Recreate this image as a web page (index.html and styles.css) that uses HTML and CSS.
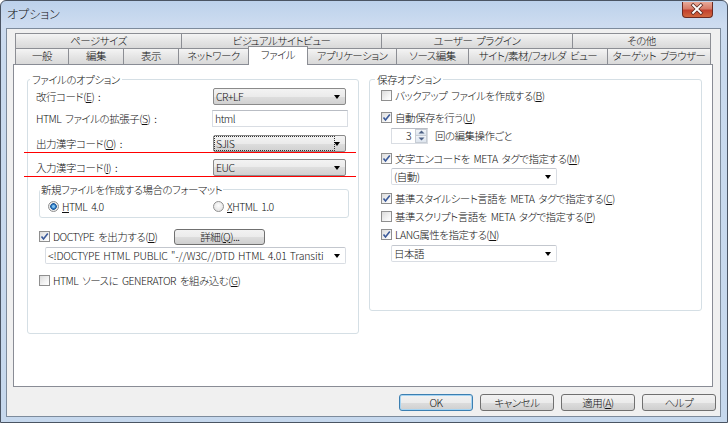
FILE: index.html
```html
<!DOCTYPE html>
<html lang="ja">
<head>
<meta charset="utf-8">
<title>オプション</title>
<link rel="stylesheet" href="styles.css">
</head>
<body>
<div class="window">
  <div class="titlebar">
    <span class="title">オプション</span>
    <div class="close">
      <svg width="31" height="16" viewBox="0 0 31 16"><path d="M11.5 4 L19.5 12 M19.5 4 L11.5 12" stroke="#5a2a22" stroke-width="3.6" stroke-linecap="square"/><path d="M11.5 4 L19.5 12 M19.5 4 L11.5 12" stroke="#fff" stroke-width="2" stroke-linecap="square"/></svg>
    </div>
  </div>
  <div class="client">
    <div class="tabs">
      <div class="tabrow row1">
        <div class="tab">ページサイズ</div>
        <div class="tab">ビジュアルサイトビュー</div>
        <div class="tab">ユーザー プラグイン</div>
        <div class="tab">その他</div>
      </div>
      <div class="tabrow row2">
        <div class="tab">一般</div>
        <div class="tab">編集</div>
        <div class="tab">表示</div>
        <div class="tab">ネットワーク</div>
        <div class="tab active">ファイル</div>
        <div class="tab">アプリケーション</div>
        <div class="tab">ソース編集</div>
        <div class="tab">サイト/素材/フォルダ ビュー</div>
        <div class="tab">ターゲット ブラウザー</div>
      </div>
    </div>
    <div class="panel">
      <div class="gbox gleft">
        <div class="gtitle">ファイルのオプション</div>
        <div class="gbody">
          <div class="frow r1"><span>改行コード(<u>E</u>) :</span><div class="combo ro"><span class="cval">CR+LF</span><i class="arrow"></i></div></div>
          <div class="frow r2"><span>HTML ファイルの拡張子(<u>S</u>) :</span><div class="tbox">html</div></div>
          <div class="frow mark r3"><span>出力漢字コード(<u>O</u>) :</span><div class="combo ro"><span class="cval focus">SJIS</span><i class="arrow"></i></div></div>
          <div class="frow mark r4"><span>入力漢字コード(<u>I</u>) :</span><div class="combo ro"><span class="cval">EUC</span><i class="arrow"></i></div></div>
          <div class="gbox sub">
            <div class="gtitle">新規ファイルを作成する場合のフォーマット</div>
            <div class="radios">
              <div class="opt"><i class="radio on"></i><span><u>H</u>TML 4.0</span></div>
              <div class="opt"><i class="radio"></i><span><u>X</u>HTML 1.0</span></div>
            </div>
          </div>
          <div class="crow doctype">
            <i class="cb on"><svg width="9" height="9" viewBox="0 0 9 9"><path d="M1.5 4.5 L3.5 7 L7.8 1.5" fill="none" stroke="#3b5a9a" stroke-width="1.6"/></svg></i>
            <span>DOCTYPE を出力する(<u>D</u>)</span>
            <div class="btn detail">詳細(<u>Q</u>)...</div>
          </div>
          <div class="combo ed dtcombo"><span class="cval clip">&lt;!DOCTYPE HTML PUBLIC "-//W3C//DTD HTML 4.01 Transiti</span><i class="arrow"></i></div>
          <div class="crow gen">
            <i class="cb"></i>
            <span>HTML ソースに GENERATOR を組み込む(<u>G</u>)</span>
          </div>
        </div>
      </div>
      <div class="gbox gright">
        <div class="gtitle">保存オプション</div>
        <div class="gbody">
          <div class="crow k1"><i class="cb"></i><span>バックアップ ファイルを作成する(<u>B</u>)</span></div>
          <div class="crow k2"><i class="cb on"><svg width="9" height="9" viewBox="0 0 9 9"><path d="M1.5 4.5 L3.5 7 L7.8 1.5" fill="none" stroke="#3b5a9a" stroke-width="1.6"/></svg></i><span>自動保存を行う(<u>U</u>)</span></div>
          <div class="srow">
            <div class="spin"><span class="sval">3</span><div class="sbtns"><div class="sbtn"><svg width="7" height="4" viewBox="0 0 7 4"><path d="M0.5 3.5 L3.5 0.5 L6.5 3.5Z" fill="#4d6185"/></svg></div><div class="sbtn"><svg width="7" height="4" viewBox="0 0 7 4"><path d="M0.5 0.5 L3.5 3.5 L6.5 0.5Z" fill="#4d6185"/></svg></div></div></div>
            <span>回の編集操作ごと</span>
          </div>
          <div class="crow k3"><i class="cb on"><svg width="9" height="9" viewBox="0 0 9 9"><path d="M1.5 4.5 L3.5 7 L7.8 1.5" fill="none" stroke="#3b5a9a" stroke-width="1.6"/></svg></i><span>文字エンコードを META タグで指定する(<u>M</u>)</span></div>
          <div class="combo ed rcombo c1"><span class="cval">(自動)</span><i class="arrow"></i></div>
          <div class="crow k4"><i class="cb on"><svg width="9" height="9" viewBox="0 0 9 9"><path d="M1.5 4.5 L3.5 7 L7.8 1.5" fill="none" stroke="#3b5a9a" stroke-width="1.6"/></svg></i><span>基準スタイルシート言語を META タグで指定する(<u>C</u>)</span></div>
          <div class="crow k5"><i class="cb"></i><span>基準スクリプト言語を META タグで指定する(<u>P</u>)</span></div>
          <div class="crow k6"><i class="cb on"><svg width="9" height="9" viewBox="0 0 9 9"><path d="M1.5 4.5 L3.5 7 L7.8 1.5" fill="none" stroke="#3b5a9a" stroke-width="1.6"/></svg></i><span>LANG属性を指定する(<u>N</u>)</span></div>
          <div class="combo ed rcombo c2"><span class="cval">日本語</span><i class="arrow"></i></div>
        </div>
      </div>
    </div>
    <div class="buttons">
      <div class="btn dlg default">OK</div>
      <div class="btn dlg">キャンセル</div>
      <div class="btn dlg">適用(<u>A</u>)</div>
      <div class="btn dlg">ヘルプ</div>
    </div>
  </div>
</div>
</body>
</html>
```

FILE: styles.css
```css
* { box-sizing: border-box; }
html, body { margin: 0; padding: 0; }
body {
  width: 728px; height: 423px; overflow: hidden;
  font-family: "Noto Sans CJK JP", "Liberation Sans", sans-serif;
  font-size: 10.5px; line-height: 13px; color: #111;
  font-weight: 300;
  letter-spacing: -0.5px;
  word-spacing: 2px;
  font-feature-settings: "palt";
  background: #fff;
}
u { text-decoration: underline; text-underline-offset: 1px; }

.window {
  width: 728px; height: 423px;
  border: 1px solid #4a5463;
  border-radius: 6px 6px 0 0;
  background: linear-gradient(#bcd1eb 0px, #cddcf0 24px, #c9daee 60px, #c6d8ed 100%);
  display: flex; flex-direction: column;
}
.titlebar {
  height: 27px; flex: none;
  display: flex; align-items: flex-start;
  padding-left: 6px;
}
.title { font-size: 12px; line-height: 14px; margin-top: 6px; letter-spacing: 0; }
.close {
  margin-left: auto; margin-right: 14px; margin-top: 1px;
  width: 31px; height: 16px;
  border: 1px solid #6b2a22; border-top: none;
  border-radius: 0 0 4px 4px;
  background: linear-gradient(#e9a998 0%, #d67b68 45%, #c2412e 55%, #d2683f 100%);
  display: flex;
}
.close svg { display: block; margin: -1px 0 0 -1px; }

.client {
  flex: 1;
  margin: 0 6px 5px 5px;
  border: 1px solid #7d8b9c;
  background: #f0f0f0;
  display: flex; flex-direction: column;
}

.tabs { padding-top: 4px; padding-left: 8px; }
.tabrow { display: flex; align-items: flex-start; }
.row1 { height: 15px; }
.row2 { height: 16px; }
.tab {
  flex: none;
  border: 1px solid #8c8e94; border-right: none; border-bottom: none;
  background: linear-gradient(#f4f4f4, #e4e4e4 55%, #d9d9d9);
  text-align: center; white-space: nowrap;
  line-height: 13px;
}
.row1 .tab { height: 15px; }
.row2 .tab { height: 16px; line-height: 14px; }
.row1 .tab:nth-child(1) { width: 166px; }
.row1 .tab:nth-child(2) { width: 200px; }
.row1 .tab:nth-child(3) { width: 191px; }
.row1 .tab:nth-child(4) { width: 139px; border-right: 1px solid #8c8e94; }
.row2 .tab:nth-child(1) { width: 53px; }
.row2 .tab:nth-child(2) { width: 55px; }
.row2 .tab:nth-child(3) { width: 55px; }
.row2 .tab:nth-child(4) { width: 70px; }
.row2 .tab:nth-child(5) { width: 60px; }
.row2 .tab:nth-child(6) { width: 88px; border-left: none; }
.row2 .tab:nth-child(7) { width: 72px; }
.row2 .tab:nth-child(8) { width: 139px; }
.row2 .tab:nth-child(9) { width: 104px; border-right: 1px solid #8c8e94; }
.row2 .tab.active {
  position: relative; z-index: 2;
  height: 19px; margin-top: -2px;
  background: #fff;
  border-right: 1px solid #8c8e94;
  line-height: 15px;
}

.panel {
  margin-left: 6px; width: 700px; height: 323px; flex: none;
  border: 1px solid #898c95;
  background: #fff;
  padding: 14px 10px 0 13px;
  display: flex; align-items: flex-start; gap: 10px;
}

.gbox { border: 1px solid #d5dfe5; border-radius: 3px; }
.gtitle {
  width: fit-content; background: #fff;
  margin-top: -7px; line-height: 13px; padding: 0 2px;
}
.gleft { width: 332px; height: 255px; }
.gleft > .gtitle { margin-left: 2px; }
.gright { width: 333px; height: 232px; }
.gright > .gtitle { margin-left: 5px; }
.gleft > .gbody { padding: 2px 12px 0 8px; }
.gright > .gbody { padding: 1px 0 0 11px; }

.frow {
  height: 17px; display: flex; align-items: center; justify-content: space-between;
  white-space: nowrap;
}
.r2 { margin-top: 5px; }
.frow.mark {
  height: 18px; margin: 0 -10px 0 -12px; padding: 0 10px 1px 12px;
  border-bottom: 1px solid #ff0000;
}
.r3 { margin-top: 8px !important; }
.r4 { margin-top: 6px !important; }

.combo {
  height: 17px; display: flex; align-items: center;
  border-radius: 2px; white-space: nowrap;
}
.combo.ro {
  width: 133px;
  border: 1px solid #8a8a8a;
  background: linear-gradient(#f3f3f3, #ebebeb 50%, #dedede 50%, #d1d1d1);
}
.combo.ed {
  border: 1px solid #d9dde3; border-top-color: #c3c7ce;
  background: #fff;
}
.cval { flex: 1; padding-left: 2px; line-height: 13px; }
.cval.clip { min-width: 0; letter-spacing: -0.15px; word-spacing: 1px; }
.cval.focus {
  flex: none; width: 119px; margin-left: 1px; padding-left: 1px;
  outline: 1px dotted #333; outline-offset: 0;
}
.r3 .combo .arrow { margin-left: auto; }
.arrow {
  flex: none; width: 0; height: 0;
  border-left: 3.5px solid transparent; border-right: 3.5px solid transparent;
  border-top: 4px solid #000;
  margin: 1px 5px 0 4px;
}
.tbox {
  width: 136px; height: 17px; margin-right: -2px;
  border: 1px solid #d9dde3; border-top-color: #b9bdc4;
  padding-left: 2px; line-height: 15px; background: #fff;
}

.gbox.sub { margin: 12px -3px 0 3px; }
.sub > .gtitle { margin-left: 0; padding: 0 1px; }
.radios {
  display: grid; grid-template-columns: 165px 1fr;
  margin-top: 4px; padding: 0 0 4px 8px; height: 17px;
}
.opt { display: flex; align-items: center; gap: 3px; height: 13px; }
.radio {
  width: 11px; height: 11px; border-radius: 50%;
  border: 1px solid #8f8f8f;
  background: radial-gradient(circle at 50% 40%, #fdfdfd, #dcdcdc);
}
.radio.on {
  background: radial-gradient(circle, #7fc1f0 0 1px, #2e78c0 2px, #1f5a9c 3px, #e8e8e8 3.6px, #f6f6f6);
}

.crow { display: flex; align-items: center; height: 17px; white-space: nowrap; }
.cb {
  flex: none; width: 11px; height: 11px; margin-right: 3px;
  border: 1px solid #8f8f8f;
  background: linear-gradient(135deg, #dcdcdc, #f7f7f7 70%, #fff);
  display: flex; align-items: center; justify-content: center;
}
.cb svg { display: block; }
.gleft .crow { margin-left: 3px; }
.doctype { margin-top: 10px; }
.btn {
  border: 1px solid #707070; border-radius: 3px;
  background: linear-gradient(#f2f2f2, #ebebeb 50%, #dddddd 50%, #cfcfcf);
  text-align: center; white-space: nowrap;
}
.btn.detail { width: 91px; height: 16px; line-height: 14px; margin-left: 17px; }
.dtcombo { margin: 2px 0 0 9px; width: 301px; }
.gen { margin-top: 8px; }

.k2 { margin-top: 5px; }
.srow { display: flex; align-items: center; margin: 1px 0 0 10px; height: 17px; gap: 7px; }
.spin {
  width: 37px; height: 16px; display: flex;
  border: 1px solid #d9dde3; border-top-color: #b9bdc4; background: #fff;
}
.sval { flex: 1; text-align: right; padding-right: 4px; line-height: 14px; }
.sbtns { width: 12px; display: flex; flex-direction: column; }
.sbtn {
  flex: 1; display: flex; align-items: center; justify-content: center;
  background: linear-gradient(#f1f4f8, #dde5ee);
  border: 1px solid #c6ccd4;
}
.sbtn + .sbtn { border-top: none; }
.sbtn svg { display: block; }
.k3 { margin-top: 6px; }
.rcombo { width: 166px; margin-left: 10px; }
.c1 { margin-top: 1px; }
.k4 { margin-top: 5px; }
.k5, .k6 { margin-top: 1px; }
.c2 { margin-top: 2px; }

.buttons {
  display: flex; justify-content: flex-end; gap: 7px;
  margin-top: 7px; padding-right: 4px;
}
.btn.dlg { width: 74px; height: 17px; line-height: 15px; }
.btn.default {
  border-color: #3c7fb1;
  box-shadow: inset 0 0 0 1px #a6d4f2;
}
```
